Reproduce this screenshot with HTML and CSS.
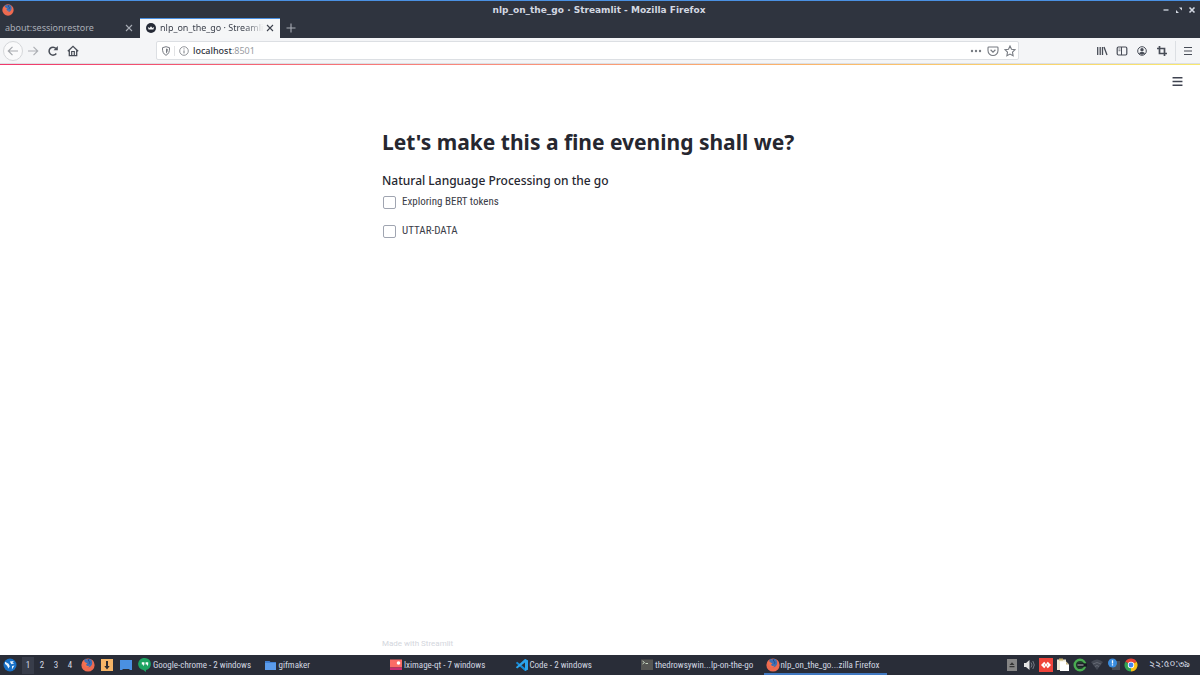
FILE: index.html
```html
<!DOCTYPE html>
<html lang="en">
<head>
<meta charset="utf-8">
<meta name="viewport" content="width=device-width, initial-scale=1">
<title>nlp_on_the_go · Streamlit</title>
<link rel="stylesheet" href="styles.css">
</head>
<body>
<svg class="defs" aria-hidden="true">
  <symbol id="firefox" viewBox="0 0 14 14">
    <circle cx="7" cy="7" r="6.6" fill="#ee6a50"/>
    <path d="M3.200 4.200C3 2.600 4 1 5 .6l.6 1.200L8 .7c2.400.5 3.400 2.300 3.200 4.500-.2 2.300-1.700 4-4 4C4.800 9.200 3.500 7 3.200 4.200z" fill="#3c6fb4"/>
    <path d="M2 3.600c1.200-.4 2.200.2 2.800 1.100l1.700.5-1.400 1.200c.4 1.500 2 1.800 3.500 1.200C8 9.600 5 9.700 3.500 8 2.400 6.700 1.900 5.200 2 3.600z" fill="#f4714f"/>
    <path d="M7.200 1.200l.5 2 1.300 1.200-.8 1.300" fill="none" stroke="#28447c" stroke-width=".9"/>
  </symbol>
  <symbol id="close" viewBox="0 0 8 8"><path d="M1 1l6 6M7 1L1 7" fill="none" stroke="currentColor" stroke-width="1.100"/></symbol>
</svg>

<header class="titlebar">
  <svg class="icon-12"><use href="#firefox"/></svg>
  <span class="window-title">nlp_on_the_go · Streamlit - Mozilla Firefox</span>
  <div class="window-controls">
    <button aria-label="Minimize"><svg viewBox="0 0 8 8"><path d="M1.500 4h5" stroke="currentColor" stroke-width="1.300"/></svg></button>
    <button aria-label="Restore"><svg viewBox="0 0 8 8"><path d="M4 1.500h3v3zM1 4v3h3z" fill="currentColor"/></svg></button>
    <button aria-label="Close window"><svg viewBox="0 0 8 8"><path d="M1.500 1.500l5 5M6.500 1.500l-5 5" stroke="currentColor" stroke-width="1.600"/></svg></button>
  </div>
</header>

<nav class="tabs" aria-label="Tabs">
  <div class="tab">
    <span class="tab-title">about:sessionrestore</span>
    <button aria-label="Close tab"><svg class="icon-8"><use href="#close"/></svg></button>
  </div>
  <div class="tab tab-active">
    <svg class="favicon" viewBox="0 0 10 10"><circle cx="5" cy="5" r="5" fill="#252a36"/><path d="M1.800 4l1.800 1L5 3.200 6.400 5l1.800-1-.8 2.600H2.600z" fill="#f5f6f7"/></svg>
    <span class="tab-title tab-fade">nlp_on_the_go · Streamlit</span>
    <button aria-label="Close tab"><svg class="icon-8"><use href="#close"/></svg></button>
  </div>
  <button class="new-tab" aria-label="New tab"><svg viewBox="0 0 10 10"><path d="M5 .5v9M.5 5h9" stroke="currentColor" stroke-width="1.100"/></svg></button>
</nav>

<div class="toolbar">
  <div class="nav-buttons">
    <button class="back" aria-label="Back"><svg viewBox="0 0 12 12"><path d="M11 6H1.500M5.500 1.800L1.300 6l4.200 4.200" fill="none" stroke="currentColor" stroke-width="1.200"/></svg></button>
    <button class="forward" aria-label="Forward"><svg viewBox="0 0 12 12"><path d="M1 6h9.500M6.500 1.800L10.700 6l-4.200 4.200" fill="none" stroke="currentColor" stroke-width="1.200"/></svg></button>
    <button aria-label="Reload"><svg viewBox="0 0 12 12"><path d="M9.300 8.500A4 4 0 1 1 9 3.400" fill="none" stroke="currentColor" stroke-width="1.500"/><path d="M10.800 1v4.300H6.500z" fill="currentColor"/></svg></button>
    <button aria-label="Home"><svg viewBox="0 0 12 12"><path d="M.8 6.300L6 1.300l5.200 5M2.300 5.500v5.200h7.400V5.500" fill="none" stroke="currentColor" stroke-width="1.300"/><path d="M4.700 10.700V6.500h2.600v4.200" fill="none" stroke="currentColor" stroke-width="1.200"/></svg></button>
  </div>
  <div class="urlbar">
    <svg class="shield" viewBox="0 0 10 10"><path d="M1.500 1.700L5 .7l3.500 1c.2 3.800-.8 6.300-3.500 7.600C2.300 8 1.300 5.500 1.500 1.700z" fill="none" stroke="currentColor"/><path d="M5 2.500l1.800.5c0 2.300-.5 3.700-1.800 4.600z" fill="currentColor"/></svg>
    <svg class="info" viewBox="0 0 10 10"><circle cx="5" cy="5" r="4.300" fill="none" stroke="currentColor" stroke-width=".8"/><path d="M5 4.400v3M5 2.400v1" stroke="currentColor"/></svg>
    <a class="url" href="#app"><b>localhost</b>:8501</a>
    <div class="url-actions">
      <button aria-label="Page actions"><svg viewBox="0 0 12 12"><g fill="currentColor"><circle cx="2" cy="6" r="1.200"/><circle cx="6" cy="6" r="1.200"/><circle cx="10" cy="6" r="1.200"/></g></svg></button>
      <button aria-label="Save to Pocket"><svg viewBox="0 0 12 12"><path d="M1.800 2h8.400q.8 0 .8.800v2.700a5 5 0 0 1-10 0V2.800q0-.8.800-.8z" fill="none" stroke="currentColor" stroke-width="1.100"/><path d="M3.600 4.800L6 7.100l2.400-2.300" fill="none" stroke="currentColor" stroke-width="1.200"/></svg></button>
      <button aria-label="Bookmark"><svg viewBox="0 0 12 12"><path d="M6 1l1.500 3.200 3.500.5-2.500 2.500.6 3.500L6 9.100l-3.100 1.600.6-3.500L1 4.700l3.500-.5z" fill="none" stroke="currentColor" stroke-width="1.100"/></svg></button>
    </div>
  </div>
  <div class="tools">
    <button aria-label="Library"><svg viewBox="0 0 12 12"><path d="M1.700 2v8M4.200 2v8M6.500 2v8M8 2l3 8" fill="none" stroke="currentColor" stroke-width="1.300"/></svg></button>
    <button aria-label="Sidebars"><svg viewBox="0 0 12 12"><rect x="1.200" y="2" width="9.600" height="8" rx="1.200" fill="none" stroke="currentColor" stroke-width="1.200"/><path d="M5.500 2v8" stroke="currentColor"/><path d="M2.500 4h2M2.500 5.700h2" stroke="currentColor" stroke-width=".7"/></svg></button>
    <button aria-label="Account"><svg viewBox="0 0 12 12"><circle cx="6" cy="6" r="4.300" fill="none" stroke="currentColor"/><circle cx="6" cy="4.800" r="1.700" fill="currentColor"/><path d="M3.100 8.500C3.800 6.600 8.200 6.600 8.900 8.500 7.500 10 4.500 10 3.100 8.500z" fill="currentColor"/></svg></button>
    <button aria-label="Screenshot"><svg viewBox="0 0 12 12"><path d="M3.500 1v7.500H11M1 3.500h7.500V11" fill="none" stroke="currentColor" stroke-width="1.700"/></svg></button>
  </div>
  <button class="app-menu" aria-label="Open menu"><svg viewBox="0 0 12 12"><path d="M2 2.500h8M2 6h8M2 9.500h8" stroke="currentColor" stroke-width="1.200"/></svg></button>
</div>

<main class="page" id="app">
  <div class="decoration"></div>
  <div class="page-menu"><button aria-label="Main menu"><svg viewBox="0 0 10 10"><path d="M.5 1.500h9M.5 5h9M.5 8.500h9" stroke="currentColor" stroke-width="1.400"/></svg></button></div>
  <div class="block">
    <h1>Let's make this a fine evening shall we?</h1>
    <h2>Natural Language Processing on the go</h2>
    <label class="check"><input type="checkbox">Exploring BERT tokens</label>
    <label class="check"><input type="checkbox">UTTAR-DATA</label>
  </div>
  <footer class="footer">Made with <a href="#app">Streamlit</a></footer>
</main>

<footer class="taskbar">
  <div class="launchers">
    <button aria-label="Application menu"><svg viewBox="0 0 14 14"><circle cx="7" cy="7" r="6.500" fill="#1670c8"/><path d="M2 3.700L5.600 5.700 6.800 8.200 5.300 10.400C4.800 8.300 3.500 7 2 6zM6.800 3.600L11 3 9.400 4.600l2 .7-3 1zM9 8l2.500-.6-2.600 4z" fill="#e9f4ff"/></svg></button>
    <div class="pager">
      <button class="current">1</button><button>2</button><button>3</button><button>4</button>
    </div>
    <button aria-label="Firefox"><svg viewBox="0 0 14 14"><use href="#firefox"/></svg></button>
    <button aria-label="Downloads"><svg viewBox="0 0 14 14"><rect x="1" y="1" width="12" height="12" fill="#f6b567"/><path d="M6 3h2v5h1.700L7 11.500 4.300 8H6z" fill="#2b2b30"/></svg></button>
    <button aria-label="Desktop"><svg viewBox="0 0 14 14"><path d="M1 2h12v10h-2l-1-1H4l-1 1H1z" fill="#4a90e2"/></svg></button>
  </div>
  <div class="tasks">
    <button class="task"><svg viewBox="0 0 14 14"><path d="M7 0a6 6 0 0 1 1 11.900V14L5.300 12A6 6 0 0 1 7 0z" fill="#1da462"/><path d="M3.800 4.200h2.600v2.400L5.200 8.200V6.600H3.800zM7.600 4.200h2.600v2.400L9 8.200V6.600H7.600z" fill="#fff"/></svg><span>Google-chrome - 2 windows</span></button>
    <button class="task"><svg viewBox="0 0 14 14"><path d="M1 3h4.500l1 1H12v8H1z" fill="#3f7fd2"/><path d="M1 5h11v7H1z" fill="#5b9cec"/></svg><span>gifmaker</span></button>
    <button class="task"><svg viewBox="0 0 14 14"><path d="M1 1.500h12v8H1z" fill="#fb6b66"/><path d="M1 9.500h12V12H1z" fill="#c92d72"/><circle cx="9.500" cy="5" r="1.800" fill="#fff"/></svg><span>lximage-qt - 7 windows</span></button>
    <button class="task"><svg viewBox="0 0 14 14"><path d="M10 1l3 1.500v9L10 13 .8 5l1.400-1.200L10 10z" fill="#168bd8"/><path d="M10 1l3 1.500v9L10 13V4.500l-7.800 6L.8 9.200z" fill="#2ba4ee"/></svg><span>Code - 2 windows</span></button>
    <button class="task"><svg viewBox="0 0 14 14"><rect x="1" y="1.500" width="12" height="10.500" fill="#565653"/><path d="M2.500 3l2 1.500-2 1.500M5.500 5.500h2.500" fill="none" stroke="#c6d4c0"/></svg><span>thedrowsywin...lp-on-the-go</span></button>
    <button class="task task-active"><svg viewBox="0 0 14 14"><use href="#firefox"/></svg><span>nlp_on_the_go...zilla Firefox</span></button>
  </div>
  <div class="tray">
    <svg viewBox="0 0 14 14"><rect x="2" y="1" width="10" height="12" fill="#858585"/><path d="M4.500 7L7 4.300 9.500 7zM4.500 8h5v1.200h-5z" fill="#333"/></svg>
    <svg viewBox="0 0 14 14"><path d="M2 5h2l3.500-3v10L4 9H2z" fill="#e4e4e4"/><path d="M9 4.500q2 2.500 0 5M10.800 3q3 4 0 8" fill="none" stroke="#777b86"/></svg>
    <svg viewBox="0 0 14 14"><rect width="14" height="14" fill="#ef443b"/><path d="M5.200 3.800L6.600 5.200 4.800 7l1.800 1.800-1.400 1.400L2 7zM8.800 3.800L12 7l-3.200 3.200-1.400-1.400L9.200 7 7.400 5.200z" fill="#fff"/><path d="M7 5.200L8.800 7 7 8.800 5.200 7z" fill="#fff"/></svg>
    <svg viewBox="0 0 14 14"><path d="M1 1.500h9V12H1z" fill="#efe9d6"/><path d="M3 .5h4v2H3z" fill="#c9b169"/><path d="M4 3.500h6l3 3V13H4z" fill="#fff"/><path d="M10 3.500v3h3z" fill="#ccb985"/></svg>
    <svg viewBox="0 0 14 14"><circle cx="7" cy="7" r="5.300" fill="#223a2e" stroke="#49ad51" stroke-width="2.400"/><path d="M4.500 5.300H14v3.400H4.500z" fill="#171a22"/><path d="M4.500 7h6" stroke="#bbb"/></svg>
    <svg viewBox="0 0 14 14"><path d="M1 4q6-5 12 0L7 12z" fill="#444954"/><path d="M3 6q4-3 8 0M5 8.500q2-2 4 0" fill="none" stroke="#646974"/></svg>
    <svg viewBox="0 0 14 14"><path d="M8 3h5v9H5v-2z" fill="#484e59"/><circle cx="5.500" cy="5" r="4.500" fill="#3a8de0"/><path d="M5.500 2.300v3.200M5.500 6.300v1.200" stroke="#fff" stroke-width="1.300"/></svg>
    <svg viewBox="0 0 14 14"><path d="M7 7L1.370 3.750A6.500 6.500 0 0 1 12.630 3.750z" fill="#e94435"/><path d="M7 7L12.630 3.750A6.500 6.500 0 0 1 7 13.500z" fill="#fbc116"/><path d="M7 7v6.500A6.500 6.500 0 0 1 1.370 3.750z" fill="#34a353"/><circle cx="7" cy="7" r="3.200" fill="#fff"/><circle cx="7" cy="7" r="2.400" fill="#4285f4"/></svg>
  </div>
  <time class="clock">২২:৫০:৩৯</time>
</footer>
</body>
</html>
```
FILE: styles.css
```css
* { box-sizing: border-box; }

body {
  margin: 0;
  min-height: 100vh;
  display: flex;
  flex-direction: column;
  background: #fff;
  font-family: "Noto Sans", "Open Sans", sans-serif;
  font-size: 9px;
}

button {
  display: flex;
  align-items: center;
  justify-content: center;
  padding: 0;
  border: 0;
  background: none;
  color: inherit;
  font: inherit;
}

svg { display: block; flex: none; }
a { color: inherit; text-decoration: none; }
.defs { display: none; }
.icon-12 { width: 12px; height: 12px; }
.icon-8 { width: 8px; height: 8px; }

/* Window title */
.titlebar {
  display: grid;
  grid-template-columns: 1fr auto 1fr;
  align-items: center;
  height: 18px;
  padding: 0 4px 0 2px;
  border-top: 1px solid #4a90e2;
  background: #2f343f;
  color: #d3d8e2;
}
.window-title { font: bold 9px/16px "DejaVu Sans", sans-serif; }
.window-controls { display: flex; justify-content: flex-end; gap: 5px; }
.window-controls svg { width: 8px; height: 8px; }

/* Tabs */
.tabs {
  display: flex;
  height: 20px;
  background: #2f343f;
  color: #a9adb6;
}
.tab {
  display: flex;
  align-items: center;
  flex: 0 1 140px;
  min-width: 0;
  padding: 0 7px 0 5px;
}
.tab-active {
  padding: 0 6px;
  background: #f5f6f7;
  box-shadow: inset 0 1px #4a90e2;
  color: #3d424d;
}
.tab-title {
  flex: 1;
  min-width: 0;
  overflow: hidden;
  white-space: nowrap;
  line-height: 16px;
}
.tab-fade { mask-image: linear-gradient(to right, #000 82%, transparent 100%); }
.favicon { width: 10px; height: 10px; margin-right: 4px; }
.tab button { margin-left: 2px; }
.new-tab { width: 22px; }
.new-tab svg { width: 10px; height: 10px; }

/* Navigation toolbar */
.toolbar {
  display: flex;
  align-items: center;
  height: 26px;
  padding: 0 6px 0 3px;
  border-bottom: 1px solid #dcdfe3;
  background: #f4f5f7;
  color: #484d57;
}
.toolbar svg { width: 12px; height: 12px; }
.nav-buttons { display: flex; align-items: center; flex: 0 0 153px; }
.nav-buttons button { width: 20px; height: 20px; }
.nav-buttons .back {
  border: 1px solid #d5d7da;
  border-radius: 50%;
  color: #a5a8ad;
  background: #fafafb;
}
.nav-buttons .forward { color: #adb0b5; }
.urlbar {
  display: flex;
  align-items: center;
  flex: 1;
  height: 19px;
  padding: 0 2px 0 4px;
  border: 1px solid #dcdfe3;
  border-radius: 2px;
  background: #fff;
  color: #777b82;
}
.toolbar .shield { width: 10px; height: 10px; margin-right: 3px; }
.toolbar .info {
  box-sizing: content-box;
  width: 10px;
  height: 10px;
  padding: 0 4px;
  border-left: 1px solid #e2e3e5;
}
.url { flex: 1; color: #999ca2; }
.url b { font-weight: 500; color: #31353e; }
.url-actions { display: flex; gap: 5px; }
.tools { display: flex; align-items: center; gap: 8px; margin-left: 77px; }
.app-menu {
  height: 20px;
  margin-left: 7px;
  padding-left: 6px;
  border-left: 1px solid #dcdfe3;
}

/* Streamlit page */
.page {
  flex: 1;
  display: flex;
  flex-direction: column;
  color: #262730;
}
.decoration { height: 1px; background: linear-gradient(to right, #f0386b, #f98b7c 40%, #fbb26b 65%, #f8e96f); }
.page-menu { display: flex; justify-content: flex-end; padding: 11px 17px 0; color: #3f4350; }
.page-menu svg { width: 11px; height: 11px; }
.block, .footer { width: 100%; max-width: 436px; margin: 0 auto; }
.block { padding-top: 40px; }
h1 {
  margin: 0 0 15px;
  font: bold 21px/30px "Noto Sans", "Open Sans", sans-serif;
}
h2 {
  margin: 0 0 4px;
  font: 500 12px/18px "Noto Sans", "Open Sans", sans-serif;
}
.check {
  display: flex;
  align-items: center;
  gap: 6px;
  width: fit-content;
  margin-bottom: 13px;
  padding-left: 1px;
  font: 11px/16px "Roboto Condensed", Roboto, sans-serif;
  color: #3b3d48;
}
.check input {
  appearance: none;
  width: 13px;
  height: 13px;
  margin: 0;
  border: 1px solid #a0a5b1;
  border-radius: 2px;
  background: #fff;
}
.check input:checked { background: #f63366; }
.footer {
  margin-top: auto;
  padding-bottom: 5px;
  font: 8px/12px Roboto, sans-serif;
  color: #d3d6dd;
}

/* Desktop panel */
.taskbar {
  display: flex;
  align-items: center;
  height: 20px;
  padding: 0 10px 0 3px;
  background: #292d38;
  color: #d3d8e2;
  font: 9px/16px "Roboto Condensed", "Open Sans", sans-serif;
}
.taskbar svg { width: 14px; height: 14px; }
.launchers { display: flex; align-items: center; gap: 5px; flex: 0 0 133px; }
.pager { display: flex; gap: 2px; }
.pager button { width: 12px; height: 17px; }
.pager .current { background: #383d4a; }
.tasks {
  display: grid;
  grid-template-columns: repeat(6, 1fr);
  gap: 2px;
  flex: 0 1 751px;
  min-width: 0;
}
.task {
  justify-content: flex-start;
  gap: 1px;
  height: 20px;
  min-width: 0;
  padding: 0 2px;
  white-space: nowrap;
}
.task-active { box-shadow: inset 0 -2px #4078c0; }
.tray { display: flex; gap: 3px; margin-left: auto; }
.clock { margin-left: 11px; font: 10px/16px "Noto Sans Bengali", "Noto Sans", sans-serif; white-space: nowrap; }
```
